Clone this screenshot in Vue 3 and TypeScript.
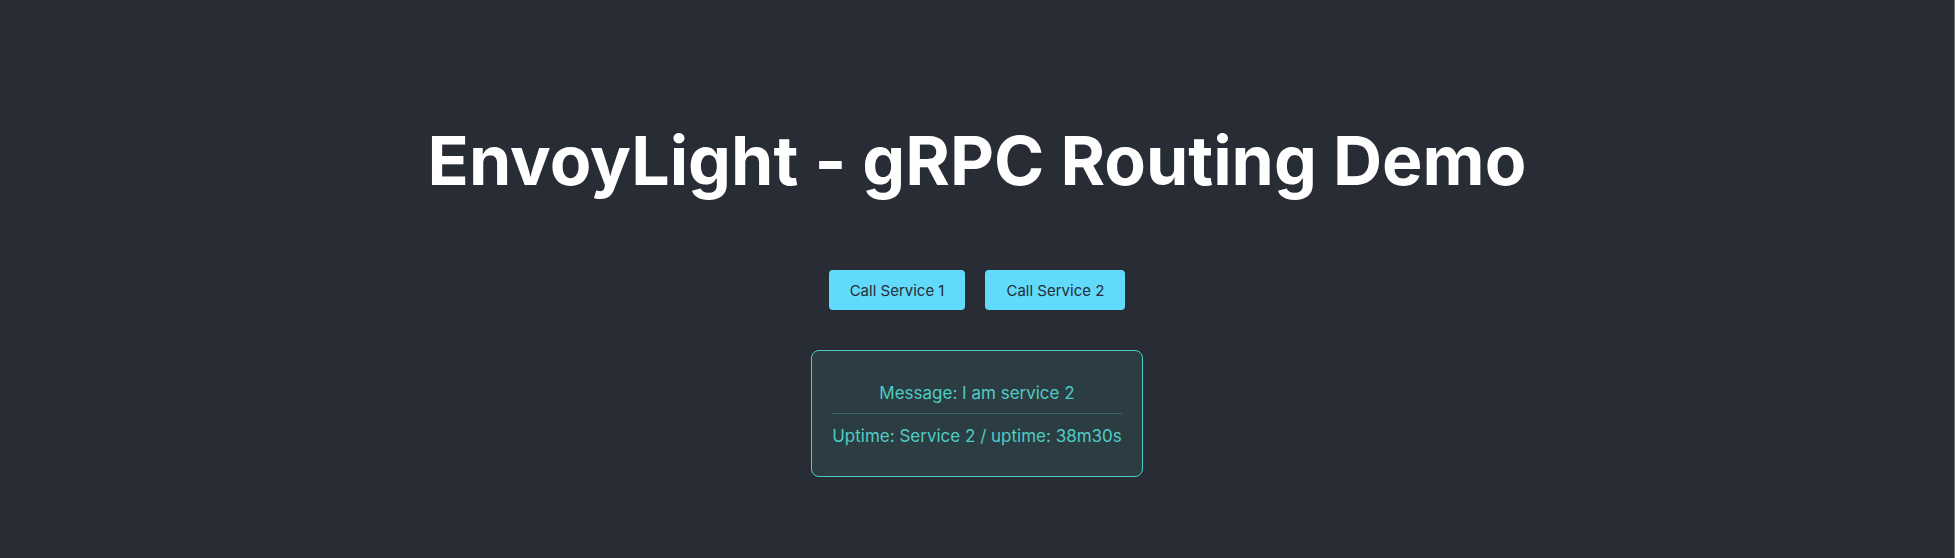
<script setup lang="ts">
import { ref } from 'vue'

interface ServiceReply {
  message: string
  uptime: string
}

const services = [1, 2]
const reply = ref<ServiceReply>({
  message: 'I am service 2',
  uptime: 'Service 2 / uptime: 38m30s',
})

function callService(id: number): void {
  reply.value = {
    message: `I am service ${id}`,
    uptime: `Service ${id} / uptime: 38m30s`,
  }
}
</script>

<template>
  <main class="app">
    <h1 class="title">EnvoyLight - gRPC Routing Demo</h1>
    <div class="actions">
      <button v-for="id in services" :key="id" type="button" class="call" @click="callService(id)">
        Call Service {{ id }}
      </button>
    </div>
    <section class="reply" aria-live="polite">
      <p class="line">Message: {{ reply.message }}</p>
      <p class="line">Uptime: {{ reply.uptime }}</p>
    </section>
  </main>
</template>

<style>
body {
  margin: 0;
  background: #282c34;
}
</style>

<style scoped>
.app {
  box-sizing: border-box;
  min-height: 100vh;
  padding: 119px 20px 80px;
  display: flex;
  flex-direction: column;
  align-items: center;
  background: #282c34;
  border-right: 1px solid #6b6f72;
  color: #fff;
  font-family: Inter, sans-serif;
}
.title {
  margin: 0 0 69px;
  font-size: 68px;
  line-height: 82px;
  font-weight: 700;
  text-align: center;
}
.actions {
  display: flex;
  gap: 20px;
  margin-bottom: 40px;
}
.call {
  height: 40px;
  padding: 0 21px;
  border: 0;
  border-radius: 4px;
  background: #61dafb;
  color: #282c34;
  font-family: inherit;
  font-size: 15px;
  cursor: pointer;
}
.reply {
  padding: 20px;
  border: 1px solid #4ecdc4;
  border-radius: 8px;
  background: rgba(78, 205, 196, 0.1);
  color: #4ecdc4;
  font-size: 17px;
  line-height: 22px;
  text-align: center;
}
.line {
  margin: 0;
  padding: 11px 0 9px;
}
.line + .line {
  border-top: 1px solid rgba(78, 205, 196, 0.3);
}
</style>
